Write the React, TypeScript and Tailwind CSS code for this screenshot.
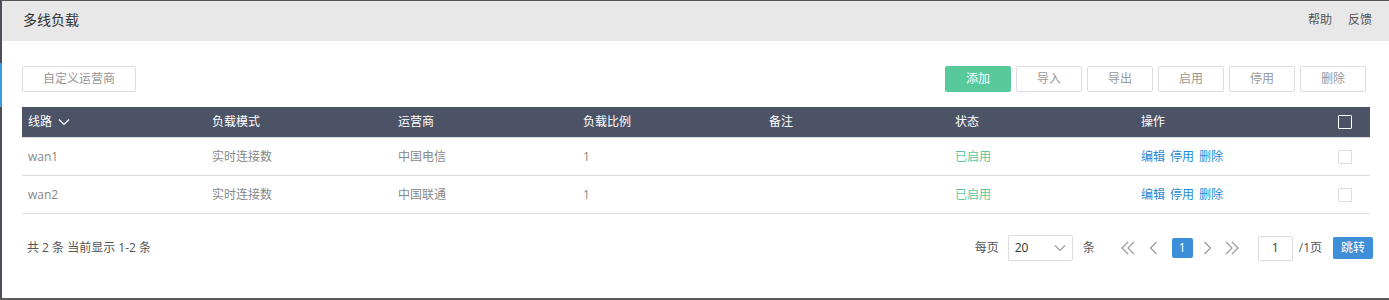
import React from 'react';

const rows = [
  { line: 'wan1', mode: '实时连接数', isp: '中国电信', ratio: '1', note: '', status: '已启用' },
  { line: 'wan2', mode: '实时连接数', isp: '中国联通', ratio: '1', note: '', status: '已启用' },
];

const cols = 'grid grid-cols-[190px_186px_185px_186px_186px_186px_181px_48px]';

const Chevron = ({ dir, double }: { dir: 'l' | 'r'; double?: boolean }) => (
  <svg width={double ? 14 : 9} height="16" viewBox={double ? '0 0 14 16' : '0 0 9 16'} fill="none" stroke="#9a9a9a" strokeWidth="1.2">
    {dir === 'l' ? (
      double ? (
        <>
          <path d="M7 2L1 8l6 6" />
          <path d="M13 2L7 8l6 6" />
        </>
      ) : (
        <path d="M7.5 2L1.5 8l6 6" />
      )
    ) : double ? (
      <>
        <path d="M1 2l6 6-6 6" />
        <path d="M7 2l6 6-6 6" />
      </>
    ) : (
      <path d="M1.5 2l6 6-6 6" />
    )}
  </svg>
);

const App: React.FC = () => {
  const tools = ['导入', '导出', '启用', '停用', '删除'];
  return (
    <div
      className="relative h-[300px] w-full bg-white border-t border-t-[#555] border-b-2 border-b-[#5a5a5a] border-l-2 border-l-[#4b4f57] text-[12px]"
      style={{ fontFamily: '"Open Sans", "Noto Sans CJK SC", sans-serif' }}
    >
      {/* neighbouring window edge */}
      <span className="absolute -left-[2px] top-[62px] h-[44px] w-[2px] bg-[#3b9de0]" />

      <div className="h-[40px] bg-[#e8e8e8] flex items-center justify-between pl-[21px] pr-[17px] pb-[3px]">
        <span className="text-[14px] text-[#333]">多线负载</span>
        <div className="flex gap-[16px] text-[12px] text-[#555]">
          <span>帮助</span>
          <span>反馈</span>
        </div>
      </div>

      <div className="pl-[20px] pr-[17px]">
        <div className="mt-[25px] flex items-center justify-between">
          <button className="h-[26px] w-[114px] border border-[#ddd] rounded-[2px] text-[#999] bg-white">自定义运营商</button>
          <div className="flex gap-[5px] mr-[6px]">
            <button className="h-[26px] w-[66px] rounded-[2px] bg-[#57c99b] text-white">添加</button>
            {tools.map(t => (
              <button key={t} className="h-[26px] w-[66px] border border-[#ddd] rounded-[2px] text-[#999] bg-white">
                {t}
              </button>
            ))}
          </div>
        </div>

        <div className="mt-[15px] w-[1348px]">
          <div className={`${cols} h-[31px] items-center bg-[#4c5366] text-white border-b border-[#ddd]`}>
            <div className="pl-[6px] flex items-center gap-[6px]">
              线路
              <svg width="12" height="8" viewBox="0 0 12 8" fill="none" stroke="#fff" strokeWidth="1.2">
                <path d="M1 1.5l5 5 5-5" />
              </svg>
            </div>
            <div>负载模式</div>
            <div>运营商</div>
            <div>负载比例</div>
            <div>备注</div>
            <div>状态</div>
            <div>操作</div>
            <div className="flex justify-center">
              <span className="w-[14px] h-[14px] border border-white rounded-[1px] -translate-x-[1px]" />
            </div>
          </div>
          {rows.map(r => (
            <div key={r.line} className={`${cols} h-[38px] items-center border-b border-[#ddd] text-[#888]`}>
              <div className="pl-[6px]">{r.line}</div>
              <div>{r.mode}</div>
              <div>{r.isp}</div>
              <div>{r.ratio}</div>
              <div>{r.note}</div>
              <div className="text-[#5cc79d]">{r.status}</div>
              <div className="flex gap-[5px] text-[#1f8ad6]">
                <span>编辑</span>
                <span>停用</span>
                <span>删除</span>
              </div>
              <div className="flex justify-center">
                <span className="w-[14px] h-[14px] border border-[#ddd] rounded-[1px] -translate-x-[1px]" />
              </div>
            </div>
          ))}
        </div>

        <div className="mt-[21px] w-[1351px] flex items-center justify-between">
          <span className="pl-[5px] text-[#555]">共 2 条 当前显示 1-2 条</span>
          <div className="flex items-center text-[#555]">
            <span>每页</span>
            <div className="ml-[9px] h-[26px] w-[65px] border border-[#ddd] rounded-[2px] flex items-center justify-between pl-[6px] pr-[6px] text-[#333]">
              <span>20</span>
              <svg width="12" height="8" viewBox="0 0 12 8" fill="none" stroke="#999" strokeWidth="1.1">
                <path d="M1 1.5l5 5 5-5" />
              </svg>
            </div>
            <span className="ml-[10px]">条</span>
            <div className="ml-[26px] flex items-center">
              <Chevron dir="l" double />
              <span className="ml-[14px]"><Chevron dir="l" /></span>
              <span className="ml-[14px] w-[21px] h-[20px] bg-[#3d8ed8] text-white rounded-[2px] flex items-center justify-center">1</span>
              <span className="ml-[10px]"><Chevron dir="r" /></span>
              <span className="ml-[13px]"><Chevron dir="r" double /></span>
            </div>
            <div className="ml-[19px] h-[25px] w-[35px] border border-[#ddd] rounded-[2px] flex items-center justify-center text-[#333]">1</div>
            <span className="ml-[6px]">/1页</span>
            <button className="ml-[11px] h-[22px] w-[40px] bg-[#3f8fd8] text-white rounded-[2px]">跳转</button>
          </div>
        </div>
      </div>
    </div>
  );
};

export default App;
